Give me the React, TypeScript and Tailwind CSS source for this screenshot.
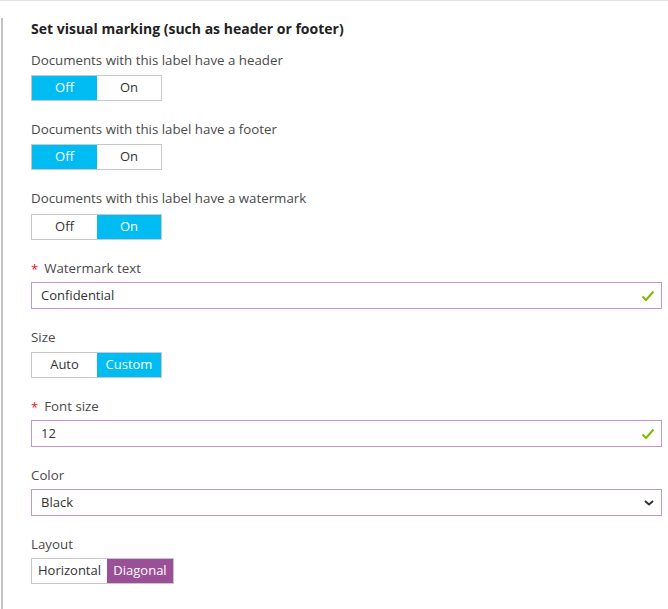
import React from "react";

const font = { fontFamily: '"Open Sans", "Noto Sans", sans-serif' };

function Toggle({
  left,
  right,
  active,
  leftW,
  rightW,
  color = "blue",
}: {
  left: string;
  right: string;
  active: "left" | "right";
  leftW: string;
  rightW: string;
  color?: "blue" | "purple";
}) {
  const on = color === "blue" ? "bg-[#00bcf2] text-white" : "bg-[#9b4f96] text-white";
  const off = "bg-white text-[#333]";
  return (
    <div className="flex h-[26px] w-fit border border-[#c8c8c8]">
      <div className={`flex items-center justify-center ${leftW} ${active === "left" ? on : off}`}>{left}</div>
      <div className={`flex items-center justify-center ${rightW} ${active === "right" ? on : off}`}>{right}</div>
    </div>
  );
}

function Check() {
  return (
    <svg width="14" height="12" viewBox="0 0 14 12" className="shrink-0">
      <path d="M1.5 6.5 L5 10 L12.5 1.5" fill="none" stroke="#7fba00" strokeWidth="2" />
    </svg>
  );
}

function Chevron() {
  return (
    <svg width="12" height="8" viewBox="0 0 12 8" className="shrink-0">
      <path d="M2 2 L6 5.5 L10 2" fill="none" stroke="#333" strokeWidth="2" />
    </svg>
  );
}

function Label({ children, required }: { children: React.ReactNode; required?: boolean }) {
  return (
    <div className="flex h-[20px] items-center text-[13.3px] text-[#4a4a4a]">
      {required && <span className="mr-[6px] text-[13px] leading-none text-[#e81123]">*</span>}
      {children}
    </div>
  );
}

function Input({ value, icon }: { value: string; icon: React.ReactNode }) {
  return (
    <div className="mt-[3px] flex h-[27px] w-[631px] items-center justify-between border border-[#c596c9] pl-[9px] pr-[6px] text-[13px] text-[#333]">
      <span>{value}</span>
      {icon}
    </div>
  );
}

export default function App() {
  return (
    <div className="h-[609px] w-[668px] bg-white" style={font}>
      <div className="h-full border-t border-[#e3e3e3]">
        <div className="ml-[1px] h-full border-l-2 border-[#c4c4c4] pl-[28px]">
          <div className="mt-[17px] flex h-[20px] items-center text-[14px] font-bold text-[#222]">
            Set visual marking (such as header or footer)
          </div>

          <div className="mt-[13px]">
            <Label>Documents with this label have a header</Label>
            <div className="mt-[4px] text-[13px]">
              <Toggle left="Off" right="On" active="left" leftW="w-[65px]" rightW="w-[64px]" />
            </div>
          </div>

          <div className="mt-[19px]">
            <Label>Documents with this label have a footer</Label>
            <div className="mt-[4px] text-[13px]">
              <Toggle left="Off" right="On" active="left" leftW="w-[65px]" rightW="w-[64px]" />
            </div>
          </div>

          <div className="mt-[19px]">
            <Label>Documents with this label have a watermark</Label>
            <div className="mt-[5px] text-[13px]">
              <Toggle left="Off" right="On" active="right" leftW="w-[65px]" rightW="w-[64px]" />
            </div>
          </div>

          <div className="mt-[19px]">
            <Label required>Watermark text</Label>
            <Input value="Confidential" icon={<Check />} />
          </div>

          <div className="mt-[19px]">
            <Label>Size</Label>
            <div className="mt-[4px] text-[13px]">
              <Toggle left="Auto" right="Custom" active="right" leftW="w-[65px]" rightW="w-[64px]" />
            </div>
          </div>

          <div className="mt-[19px]">
            <Label required>Font size</Label>
            <Input value="12" icon={<Check />} />
          </div>

          <div className="mt-[19px]">
            <Label>Color</Label>
            <Input value="Black" icon={<Chevron />} />
          </div>

          <div className="mt-[19px]">
            <Label>Layout</Label>
            <div className="mt-[3px] text-[13px]">
              <Toggle left="Horizontal" right="Diagonal" active="right" leftW="w-[75px]" rightW="w-[66px]" color="purple" />
            </div>
          </div>
        </div>
      </div>
    </div>
  );
}
